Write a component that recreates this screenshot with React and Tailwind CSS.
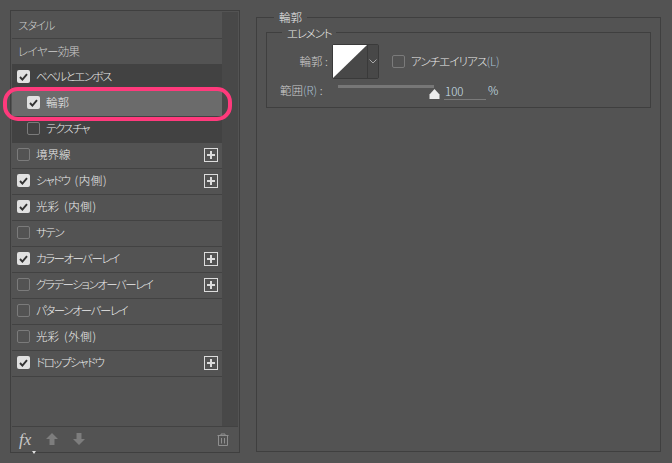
import React from 'react';

const FONT = '"Noto Sans CJK JP", "Liberation Sans", sans-serif';

const effects = [
  { label: 'ベベルとエンボス', checked: true, dark: true, kana: true },
  { label: '輪郭', checked: true, sub: true, selected: true },
  { label: 'テクスチャ', checked: false, sub: true, dark: true, kana: true },
  { label: '境界線', checked: false, plus: true },
  { label: 'シャドウ', suffix: '(内側)', checked: true, plus: true, kana: true },
  { label: '光彩', suffix: '(内側)', checked: true },
  { label: 'サテン', checked: false, kana: true },
  { label: 'カラーオーバーレイ', checked: true, plus: true, kana: true },
  { label: 'グラデーションオーバーレイ', checked: false, plus: true, kana: true },
  { label: 'パターンオーバーレイ', checked: false, kana: true },
  { label: '光彩', suffix: '(外側)', checked: false },
  { label: 'ドロップシャドウ', checked: true, plus: true, kana: true },
];

const Checkbox = ({ checked }) =>
  checked ? (
    <span className="flex h-[13px] w-[13px] shrink-0 items-center justify-center rounded-[2px] bg-[#e1e1e1]">
      <svg width="9" height="8" viewBox="0 0 9 8">
        <path d="M1 4l2.4 2.6L8 1.2" fill="none" stroke="#333" strokeWidth="1.9" />
      </svg>
    </span>
  ) : (
    <span className="block h-[13px] w-[13px] shrink-0 rounded-[2px] border border-[#7b7b7b]" />
  );

const PlusBox = () => (
  <span className="ml-auto mr-[4px] flex h-[14px] w-[14px] items-center justify-center border border-[#dcdcdc]">
    <svg width="10" height="10" viewBox="0 0 10 10">
      <path d="M5 1v8M1 5h8" stroke="#dcdcdc" strokeWidth="2" />
    </svg>
  </span>
);

const EffectRow = ({ item }) => (
  <div
    className={`relative flex h-[26px] items-center border-b border-[#424242] pb-[2px] text-[11.5px] font-light text-[#ececec] ${
      item.sub ? 'pl-[15px]' : 'pl-[5px]'
    } ${item.selected ? 'z-10 bg-[#6b6b6b]' : item.dark ? 'bg-[#424242]' : ''}`}
  >
    <Checkbox checked={item.checked} />
    <span className={`ml-[6px] whitespace-nowrap ${item.kana ? 'tracking-[-1.5px]' : ''}`}>{item.label}</span>
    {item.suffix && (
      <span className="ml-[5px] whitespace-nowrap tracking-[0.6px]">{item.suffix}</span>
    )}
    {item.plus && <PlusBox />}
    {item.selected && (
      <span className="absolute left-[-9px] right-[-10px] top-[-4px] h-[34px] rounded-[15px] border-[4px] border-[#ff3a7c]" />
    )}
  </div>
);

const App = () => (
  <div
    className="flex h-[463px] w-[672px] items-start overflow-hidden bg-[#535353] pl-[10px] pt-[10px] [font-feature-settings:'palt']"
    style={{ fontFamily: FONT }}
  >
    {/* left list */}
    <div className="flex h-[443px] w-[230px] shrink-0 flex-col border border-[#3f3f3f] p-[1px]">
      <div className="flex h-[414px] shrink-0">
        <div className="w-[210px] shrink-0 pt-[1px]">
          <div className="flex h-[26px] items-center border-b border-[#424242] pl-[6px] text-[11.5px] font-light tracking-[-1.3px] text-[#cccccc]">
            スタイル
          </div>
          <div className="flex h-[26px] items-center border-b border-[#424242] pl-[6px] text-[11.5px] font-light tracking-[-0.6px] text-[#cccccc]">
            レイヤー効果
          </div>
          {effects.map((item, i) => (
            <EffectRow key={i} item={item} />
          ))}
        </div>
        <div className="flex-1 bg-[#484848]" />
      </div>
      <div className="flex flex-1 items-center border-t border-[#424242] pl-[7px] pr-[9px] text-[#bcbcbc]">
        <span className="relative font-['Liberation_Serif'] text-[17px] italic leading-none text-[#c8c8c8]">
          fx
          <span className="absolute bottom-[-6px] left-[13px] h-0 w-0 border-x-[2px] border-t-[3px] border-x-transparent border-t-[#e0e0e0]" />
        </span>
        <svg className="ml-[15px]" width="12" height="12" viewBox="0 0 12 12">
          <path d="M6 0l6 6H8.5v6h-5V6H0z" fill="#7d7d7d" />
        </svg>
        <svg className="ml-[15px]" width="12" height="12" viewBox="0 0 12 12">
          <path d="M6 12L0 6h3.5V0h5v6H12z" fill="#7d7d7d" />
        </svg>
        <svg className="ml-auto" width="12" height="13" viewBox="0 0 12 13">
          <path
            d="M0.500 2.500h11M4 2.500V1h4v1.500M1.500 2.500V12.500h9V2.500M4.500 5v5.500M7.500 5v5.500"
            fill="none"
            stroke="#8f8f8f"
          />
        </svg>
      </div>
    </div>

    {/* right settings */}
    <div className="relative ml-[16px] mt-[7px] h-[435px] w-[405px] shrink-0 border border-[#3f3f3f] px-[9px] pt-[14px]">
      <span className="absolute left-[17px] top-[-9px] bg-[#535353] px-[5px] text-[11.5px] font-light leading-[16px] text-[#ececec]">
        輪郭
      </span>
      <div className="relative h-[76px] border border-[#3f3f3f]">
        <span className="absolute left-[15px] top-[-8px] bg-[#535353] px-[5px] text-[11.5px] font-light leading-[16px] tracking-[-1.2px] text-[#ececec]">
          エレメント
        </span>
        <div className="ml-[28px] mt-[11px] flex items-center">
          <span className="w-[36px] whitespace-nowrap pr-[3px] text-right text-[11.5px] font-light text-[#cccccc]">輪郭 :</span>
          <div className="ml-[1px] flex h-[35px] w-[47px] shrink-0 rounded-[2px] border border-[#3a3a3a]">
            <svg width="34" height="33" viewBox="0 0 34 33" className="block">
              <rect width="34" height="33" fill="#484848" />
              <path d="M0 33L34 0H0z" fill="#fff" />
            </svg>
            <div className="flex flex-1 items-center justify-center border-l border-[#3a3a3a] bg-[#484848]">
              <svg width="8" height="5" viewBox="0 0 8 5">
                <path d="M0.500 0.500L4 4l3.500-3.500" fill="none" stroke="#a8a8a8" />
              </svg>
            </div>
          </div>
          <span className="ml-[13px] block">
            <Checkbox checked={false} />
          </span>
          <span className="ml-[6px] whitespace-nowrap text-[11.5px] font-light tracking-[-0.9px] text-[#ececec]">
            アンチエイリアス<span className="tracking-normal text-[#a9c0d4]">(L)</span>
          </span>
        </div>
        <div className="mt-[2px] flex h-[20px] items-center pl-[13px]">
          <span className="w-[49px] shrink-0 whitespace-nowrap text-[11.5px] font-light text-[#cccccc]">
            範囲<span className="text-[#a9c0d4]">(R)</span> :
          </span>
          <div className="relative ml-[9px] h-[3px] w-[96px] shrink-0 -translate-y-[5px] bg-[#777777]">
            <svg className="absolute right-[-6px] top-[4px]" width="11" height="10" viewBox="0 0 11 10">
              <path d="M5.500 0L10.500 5.500V10H0.500V5.500z" fill="#ececec" />
            </svg>
          </div>
          <span className="ml-[10px] w-[42px] shrink-0 border-b border-[#7a7a7a] pl-[1px] text-[11.5px] font-light leading-[16px] text-[#cfe0ee]">
            100
          </span>
          <span className="ml-[2px] text-[11.5px] font-light text-[#cfe0ee]">%</span>
        </div>
      </div>
    </div>
  </div>
);

export default App;
